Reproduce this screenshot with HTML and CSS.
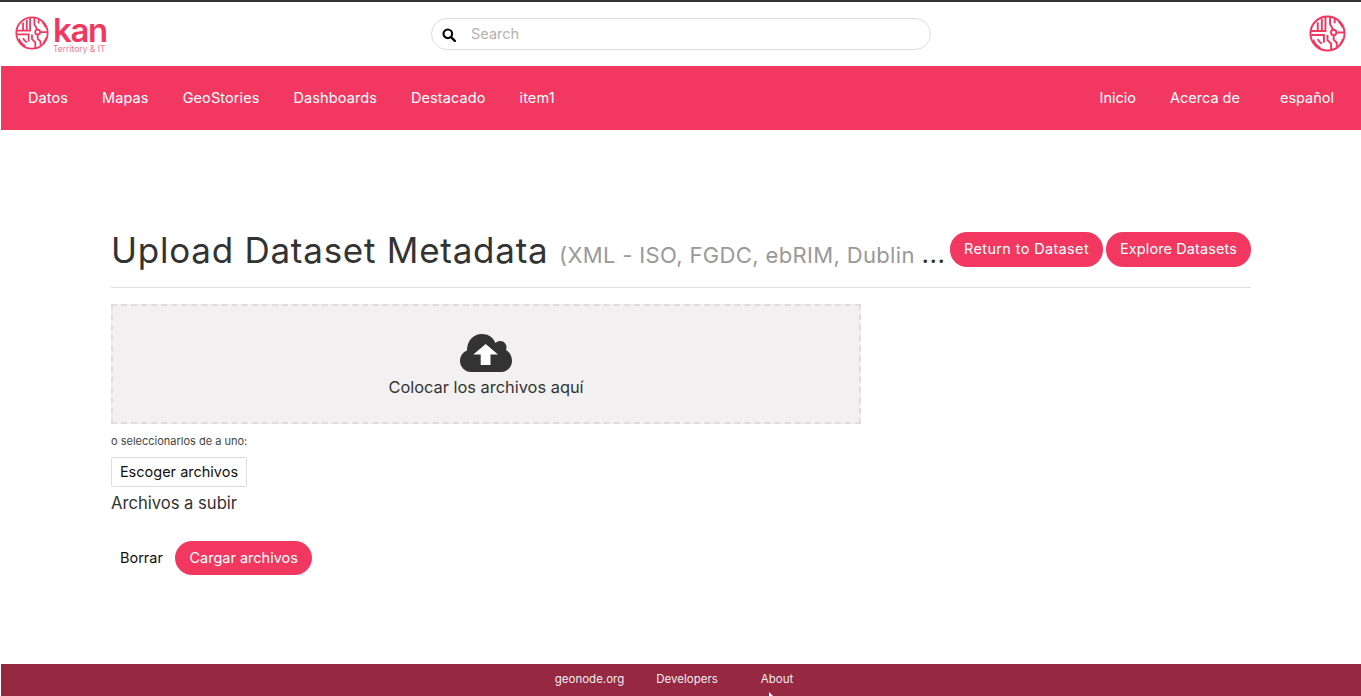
FILE: index.html
```html
<!DOCTYPE html>
<html lang="en">
<head>
    <meta charset="UTF-8">
    <meta name="viewport" content="width=device-width, initial-scale=1.0">
    <title>Upload Dataset Metadata</title>
    <link rel="stylesheet" href="styles.css">
</head>
<body>
    <svg class="sprite" aria-hidden="true">
        <symbol id="kan-mark" viewBox="0 0 36 36">
            <g fill="none" stroke="#f23860" stroke-width="1.9">
                <circle cx="18" cy="18" r="16.6"/>
                <path d="M2 15.5H16V2M12.5 15.5V4M8.5 15.5V7"/>
                <path d="M20.500 2V9l3.500 6M25 3.500V8M29 6.500A15 15 0 0 1 32.500 12M27 17H34"/>
                <path d="M2 19.500H14.500V27M4 24A15 15 0 0 0 11 32M8.500 23.500A10 10 0 0 0 12.500 28"/>
                <path d="M18 19.500V24.500l3.500 3.500V34M24 20V24l3 3V31M33 23A16 16 0 0 1 30 29"/>
                <circle cx="24" cy="17" r="2.600" fill="#fff"/>
            </g>
        </symbol>
    </svg>

    <header class="topbar">
        <a class="brand" href="#">
            <svg class="logo-mark"><use href="#kan-mark"/></svg>
            <span class="brand-text">
                <span class="brand-name">kan</span>
                <span class="brand-sub">Territory &amp; IT</span>
            </span>
        </a>
        <form class="search">
            <svg class="search-icon" viewBox="0 0 14 14">
                <circle cx="5.800" cy="5.800" r="4.300" fill="none" stroke="#000" stroke-width="2.100"/>
                <path d="M9 9l3.800 3.800" stroke="#000" stroke-width="2.400" stroke-linecap="round"/>
            </svg>
            <input class="search-input" type="text" placeholder="Search">
        </form>
        <svg class="avatar"><use href="#kan-mark"/></svg>
    </header>

    <nav class="navbar">
        <ul class="nav-list">
            <li><a href="#">Datos</a></li>
            <li><a href="#">Mapas</a></li>
            <li><a href="#">GeoStories</a></li>
            <li><a href="#">Dashboards</a></li>
            <li><a href="#">Destacado</a></li>
            <li><a href="#">item1</a></li>
        </ul>
        <ul class="nav-list nav-right">
            <li><a href="#">Inicio</a></li>
            <li><a href="#">Acerca de</a></li>
            <li class="nav-lang"><a href="#">español</a></li>
        </ul>
    </nav>

    <main class="content">
        <div class="page-header">
            <h2 class="page-title">Upload Dataset Metadata <small>(XML - ISO, FGDC, ebRIM, Dublin</small><span class="ellipsis">...</span></h2>
            <div class="header-actions">
                <a class="btn-pill btn-return" href="#">Return to Dataset</a>
                <a class="btn-pill btn-explore" href="#">Explore Datasets</a>
            </div>
        </div>

        <div class="dropzone">
            <svg class="cloud" viewBox="0 0 52 38">
                <path d="M11 38C5 38 0 33 0 27C0 22 3 18 7 16.500C7 7 13 0 22 0C28 0 33 3 35.500 9C37 7.500 39 7 40 7C44 7 46.500 10 46.500 13C46.500 14 46.300 15 46 16C49.500 18 52 22 52 27C52 33 47 38 41 38Z" fill="#333"/>
                <path d="M25.700 10L13.300 20.500H20.700V31H30.500V20.500H38Z" fill="#fff"/>
            </svg>
            <p class="drop-text">Colocar los archivos aquí</p>
        </div>

        <p class="pick-hint">o seleccionarlos de a uno:</p>
        <button class="btn-file" type="button">Escoger archivos</button>
        <h5 class="files-title">Archivos a subir</h5>

        <div class="form-actions">
            <button class="btn-plain" type="button">Borrar</button>
            <button class="btn-pill" type="button">Cargar archivos</button>
        </div>
    </main>

    <footer class="footer">
        <a href="#">geonode.org</a>
        <a href="#">Developers</a>
        <a class="footer-about" href="#">About</a>
        <svg class="cursor" viewBox="0 0 8 4"><path d="M1 0L1 4H5Z" fill="#fff"/></svg>
    </footer>
</body>
</html>
```

FILE: styles.css
```css
* {
    box-sizing: border-box;
}

html, body {
    height: 100%;
}

body {
    font-family: Inter, "Open Sans", sans-serif;
    background-color: #fff;
    color: #333;
    margin: 0;
    padding: 0 0 0 1px;
    border-top: 2px solid #333;
    display: flex;
    flex-direction: column;
    overflow: hidden;
}

a {
    text-decoration: none;
    color: inherit;
}

.sprite {
    display: none;
}

/* top bar */
.topbar {
    height: 64px;
    display: flex;
    align-items: center;
    padding: 0 15px 2px 14px;
    position: relative;
    flex: none;
}

.brand {
    display: flex;
    align-items: center;
    gap: 4px;
    color: #f23860;
}

.logo-mark {
    width: 34px;
    height: 34px;
}

.brand-text {
    display: flex;
    flex-direction: column;
    width: 56px;
    margin-top: 4px;
}

.brand-name {
    font-size: 33px;
    font-weight: 600;
    line-height: 28px;
    letter-spacing: -1.4px;
}

.brand-sub {
    font-size: 8.5px;
    line-height: 10px;
    white-space: nowrap;
    opacity: 0.7;
}

.search {
    position: absolute;
    left: 430px;
    top: 16px;
    width: 500px;
    height: 32px;
    border: 1px solid #ddd;
    border-radius: 16px;
    display: flex;
    align-items: center;
    padding-left: 10px;
}

.search-icon {
    width: 14px;
    height: 14px;
    flex: none;
    margin-top: 1px;
}

.search-input {
    border: none;
    outline: none;
    font: inherit;
    font-size: 14.5px;
    margin-left: 15px;
    padding: 0 0 2px;
    width: 400px;
}

.search-input::placeholder {
    color: #b5b0b0;
}

.avatar {
    width: 37px;
    height: 37px;
    margin-left: auto;
}

/* pink nav */
.navbar {
    height: 64px;
    background-color: #f23860;
    display: flex;
    justify-content: space-between;
    align-items: center;
    padding: 0 10px 2px;
    flex: none;
}

.nav-list {
    display: flex;
    list-style: none;
    margin: 0;
    padding: 0;
}

.nav-list a {
    display: block;
    padding: 0 17px;
    color: #fff;
    font-size: 14.5px;
    letter-spacing: 0.1px;
}

.nav-right a {
    letter-spacing: 0;
}

.nav-lang {
    margin-left: 6px;
}

/* main */
.content {
    flex: 1;
    padding: 102px 110px 0;
}

.page-header {
    display: flex;
    justify-content: space-between;
    align-items: center;
    height: 56px;
    border-bottom: 1px solid #ddd;
    padding-bottom: 20px;
}

.page-title {
    margin: 6px 0 0;
    font-size: 35px;
    line-height: 35px;
    font-weight: 400;
    letter-spacing: 0.75px;
    color: #333;
    white-space: nowrap;
}

.page-title small {
    font-size: 22px;
    letter-spacing: 0.35px;
    color: #999;
    margin-left: 0;
}

.ellipsis {
    font-size: 22px;
    font-weight: 600;
    letter-spacing: 1px;
    margin-left: 7px;
}

.header-actions {
    display: flex;
    gap: 3px;
}

.btn-pill {
    display: inline-block;
    background-color: #f23860;
    color: #fff;
    border: none;
    border-radius: 17px;
    padding: 0 14.5px;
    height: 34px;
    line-height: 34px;
    font-family: inherit;
    font-size: 14.5px;
}

.btn-return,
.btn-explore {
    height: 35px;
    padding: 0 14px;
}

.btn-return {
    letter-spacing: 0.35px;
}

.btn-explore {
    letter-spacing: 0.1px;
}

.dropzone {
    width: 750px;
    height: 120px;
    margin-top: 16px;
    background-color: #f2f0f0;
    border: 2px dashed #ddd;
    text-align: center;
    padding-top: 28px;
}

.cloud {
    width: 52px;
    height: 38px;
    display: block;
    margin: 0 auto;
}

.drop-text {
    margin: 5px 0 0;
    font-size: 16.4px;
}

.pick-hint {
    margin: 11px 0 0;
    font-size: 11px;
    line-height: 13px;
    color: #444;
}

.btn-file {
    display: block;
    margin-top: 9px;
    width: 136px;
    height: 30px;
    padding: 0 0 2px;
    background-color: #fff;
    border: 1px solid #ddd;
    border-radius: 2px;
    font-family: inherit;
    font-size: 14.5px;
    color: #111;
}

.files-title {
    margin: 6px 0 0;
    font-size: 16.6px;
    font-weight: 400;
    line-height: 20px;
}

.form-actions {
    display: flex;
    align-items: center;
    gap: 3px;
    margin-top: 28px;
}

.btn-plain {
    background: none;
    border: none;
    padding: 0 9px 2px;
    font-family: inherit;
    font-size: 14.5px;
    color: #111;
}

/* footer */
.footer {
    height: 32px;
    background-color: #962842;
    display: flex;
    justify-content: center;
    gap: 32px;
    padding: 8px 14px 0 0;
    font-size: 11.5px;
    color: #eee;
    flex: none;
    position: relative;
}

.footer-about {
    margin-left: 11px;
}

.cursor {
    position: absolute;
    left: 767px;
    bottom: 0;
    width: 8px;
    height: 4px;
}
```
